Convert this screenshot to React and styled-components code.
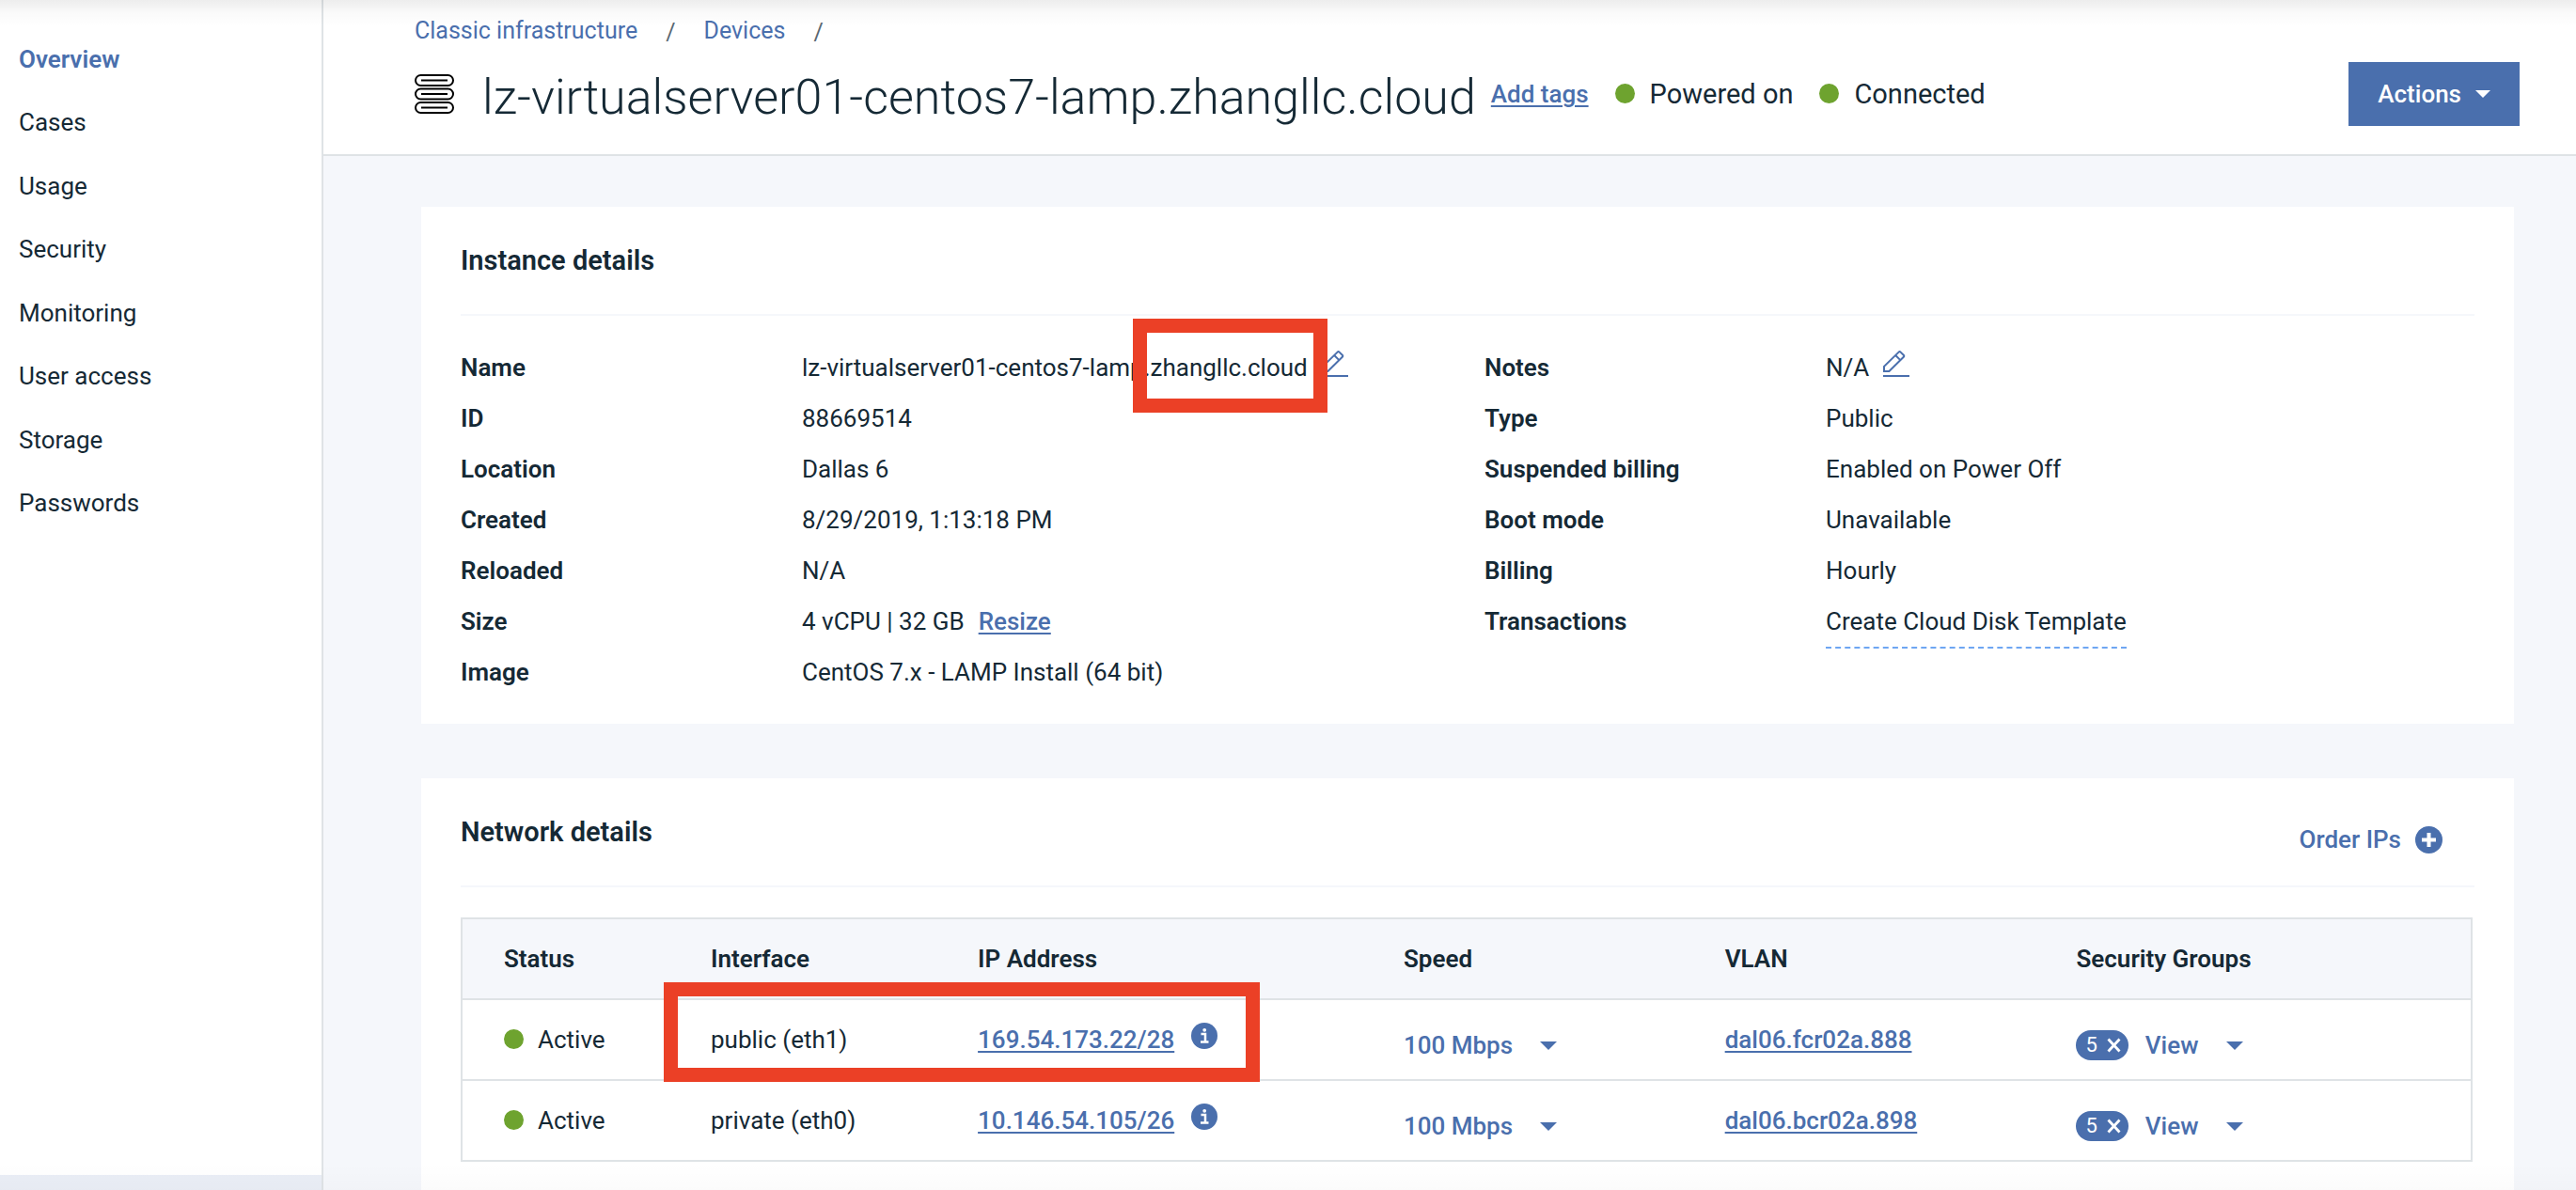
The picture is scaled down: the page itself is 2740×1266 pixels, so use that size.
import React from "react";
import styled, { createGlobalStyle } from "styled-components";

const color = {
  text: "#152935",
  link: "#4a6fad",
  page: "#f5f7fb",
  border: "#dfe3e6",
  green: "#6ea32f",
  red: "#eb4026",
  dash: "#6ea6f2",
};

const GlobalStyle = createGlobalStyle`
  *, *::before, *::after { box-sizing: border-box; }
  body {
    margin: 0;
    background: #ffffff;
    color: ${color.text};
    font-family: Roboto, "Liberation Sans", sans-serif;
    font-size: 26px;
    line-height: 34px;
  }
  button, select { font: inherit; }
`;

const Page = styled.div`
  position: relative;
  display: flex;
  min-height: 100vh;
`;

const Shade = styled.div`
  position: absolute;
  left: 0;
  right: 0;
  z-index: 5;
  pointer-events: none;
`;

const TopShade = styled(Shade)`
  top: 0;
  height: 28px;
  background: linear-gradient(rgba(0, 0, 0, 0.07), rgba(0, 0, 0, 0.02) 50%, rgba(0, 0, 0, 0));
`;

const BottomShade = styled(Shade)`
  bottom: 0;
  height: 28px;
  background: linear-gradient(rgba(0, 0, 0, 0), rgba(0, 0, 0, 0.015));
`;

const Sidebar = styled.aside`
  flex: 0 0 344px;
  display: flex;
  flex-direction: column;
  border-right: 2px solid ${color.border};
`;

const NavList = styled.ul`
  display: grid;
  grid-auto-rows: 1fr;
  height: 540px;
  margin: 29px 0 0;
  padding: 0 20px;
  list-style: none;
`;

const NavItem = styled.li`
  display: flex;
  align-items: center;
`;

const NavLink = styled.a`
  color: ${(p) => (p.$active ? color.link : color.text)};
  font-weight: ${(p) => (p.$active ? 600 : 400)};
  text-decoration: none;
`;

const SidebarFooter = styled.div`
  height: 16px;
  margin-top: auto;
  background: #eaeef6;
`;

const Main = styled.div`
  flex: 1;
  min-width: 0;
  display: flex;
  flex-direction: column;
  background: ${color.page};
`;

const Header = styled.header`
  padding: 18px 60px 30px 97px;
  background: #ffffff;
  border-bottom: 2px solid ${color.border};
`;

const Breadcrumb = styled.nav`
  display: flex;
  gap: 30px;
  font-size: 25px;
  line-height: 30px;
`;

const Crumb = styled.a`
  color: ${color.link};
  text-decoration: none;
`;

const Slash = styled.span`
  color: #5a6872;
  line-height: 34px;
  height: 30px;
`;

const TitleRow = styled.div`
  display: flex;
  align-items: center;
  margin-top: 18px;
`;

const Title = styled.h1`
  margin: 0 16px 0 30px;
  padding-top: 8px;
  font-size: 52px;
  font-weight: 300;
  line-height: 60px;
`;

const TextLink = styled.a`
  color: ${color.link};
  font-weight: 500;
  text-decoration: underline;
  text-decoration-thickness: 2px;
  text-underline-offset: 3px;
`;

const Status = styled.span`
  display: flex;
  align-items: center;
  gap: 16px;
  margin-left: 28px;
  font-size: 29px;
`;

const Dot = styled.span`
  flex: none;
  width: 21px;
  height: 21px;
  margin-bottom: 2px;
  border-radius: 50%;
  background: ${color.green};
`;

const ActionsButton = styled.button`
  display: flex;
  align-items: center;
  gap: 15px;
  height: 68px;
  margin-left: auto;
  padding: 0 31px;
  border: 0;
  background: ${color.link};
  color: #ffffff;
  font-weight: 500;
`;

const Content = styled.main`
  flex: 1;
  display: flex;
  flex-direction: column;
  gap: 58px;
  padding: 54px 66px 0 104px;
`;

const Card = styled.section`
  flex: ${(p) => (p.$fill ? 1 : "none")};
  padding: 0 42px 28px;
  background: #ffffff;
`;

const CardHeader = styled.div`
  display: flex;
  align-items: center;
  justify-content: space-between;
  height: 116px;
  border-bottom: 2px solid ${color.page};
`;

const CardTitle = styled.h2`
  margin: 0;
  font-size: 29px;
  font-weight: 600;
`;

const OrderButton = styled.button`
  display: flex;
  align-items: center;
  gap: 15px;
  padding: 16px 34px 0 0;
  border: 0;
  background: none;
  color: ${color.link};
  font-weight: 500;
`;

const DetailColumns = styled.div`
  display: grid;
  grid-template-columns: 1fr 1fr;
  column-gap: 36px;
  align-items: start;
  padding-top: 28px;
`;

const DetailList = styled.dl`
  display: grid;
  grid-template-columns: 1fr 2fr;
  grid-auto-rows: 54px;
  column-gap: 18px;
  align-items: center;
  margin: 0;
`;

const Term = styled.dt`
  font-weight: 600;
`;

const Value = styled.dd`
  position: relative;
  display: flex;
  align-items: center;
  gap: 15px;
  height: 54px;
  margin: 0;
`;

const Pending = styled.span`
  align-self: flex-start;
  height: 56px;
  padding-top: 10px;
  border-bottom: 2px dashed ${color.dash};
`;

const IconButton = styled.button`
  display: flex;
  padding: 0 0 8px;
  border: 0;
  background: none;
  color: ${color.link};
`;

const Highlight = styled.span`
  position: absolute;
  z-index: 2;
  top: ${(p) => p.$top}px;
  left: ${(p) => p.$left}px;
  width: ${(p) => p.$width}px;
  height: ${(p) => p.$height}px;
  border: 15px solid ${color.red};
  pointer-events: none;
`;

const NetworkTable = styled.table`
  width: calc(100% - 2px);
  margin-top: 32px;
  table-layout: fixed;
  border: 2px solid ${color.border};
  border-spacing: 0;
`;

const HeadCell = styled.th`
  width: ${(p) => p.$width};
  height: 84px;
  padding: 0 0 0 44px;
  background: ${color.page};
  font-weight: 600;
  text-align: left;
`;

const Cell = styled.td`
  position: relative;
  height: 86px;
  padding: 0 0 0 44px;
  border-top: 2px solid ${color.border};
`;

const CellRow = styled.div`
  display: flex;
  align-items: center;
  gap: ${(p) => p.$gap}px;
  padding-top: ${(p) => p.$drop || 0}px;
`;

const SpeedSelect = styled.select`
  appearance: none;
  padding: 0;
  border: 0;
  background: none;
  color: ${color.link};
  font-weight: 500;
`;

const ViewButton = styled.button`
  display: flex;
  align-items: center;
  gap: 30px;
  padding: 0;
  border: 0;
  background: none;
  color: ${color.link};
  font-weight: 500;
`;

const Badge = styled.button`
  display: flex;
  align-items: center;
  gap: 10px;
  height: 32px;
  padding: 0 8px 0 10px;
  border: 0;
  border-radius: 16px;
  background: ${color.link};
  color: #ffffff;
  font-size: 22px;
  line-height: 32px;
`;

const Drawing = styled.svg`
  display: block;
  flex: none;
`;

const LinkDrawing = styled(Drawing)`
  color: ${color.link};
`;

const ServerIcon = () => (
  <Drawing width="42" height="42" viewBox="0 0 42 42" fill="none" stroke="#000" strokeWidth="2">
    {[1, 15.5, 30].map((y) => (
      <g key={y}>
        <rect x="1" y={y} width="40" height="11" rx="5.5" />
        <path d={`M7 ${y + 5.5}h28`} />
      </g>
    ))}
  </Drawing>
);

const PencilIcon = () => (
  <Drawing width="28" height="28" viewBox="0 0 28 28" fill="none" stroke="currentColor" strokeWidth="2">
    <path d="M1 22v-5.2L16.6 1.6q1-1 2 0l3.2 3.2q1 1 0 2L6.4 22zM13.2 5l5.4 5.4M0 27h28" />
  </Drawing>
);

const caretPath = "M0 0h18L9 9z";

const Caret = ({ width = 18, height = 9 }) => (
  <Drawing width={width} height={height} viewBox="0 0 18 9" fill="currentColor">
    <path d={caretPath} />
  </Drawing>
);

const SelectCaret = () => (
  <LinkDrawing width="18" height="9" viewBox="0 0 18 9" fill="currentColor">
    <path d={caretPath} />
  </LinkDrawing>
);

const PlusIcon = () => (
  <Drawing width="29" height="29" viewBox="0 0 29 29">
    <circle cx="14.5" cy="14.5" r="14.5" fill="currentColor" />
    <path d="M14.5 7v15M7 14.5h15" stroke="#fff" strokeWidth="4" />
  </Drawing>
);

const InfoIcon = () => (
  <Drawing width="28" height="28" viewBox="0 0 28 28">
    <circle cx="14" cy="14" r="14" fill="currentColor" />
    <path d="M10.5 12H15v8.5M10 20.5h8.5" stroke="#fff" strokeWidth="2.5" fill="none" />
    <circle cx="14.2" cy="7.8" r="1.9" fill="#fff" />
  </Drawing>
);

const CrossIcon = () => (
  <Drawing width="15" height="16" viewBox="0 0 15 16" stroke="#fff" strokeWidth="2.8">
    <path d="M1.5 1.5l12 13M13.5 1.5l-12 13" />
  </Drawing>
);

const navItems = ["Overview", "Cases", "Usage", "Security", "Monitoring", "User access", "Storage", "Passwords"];

const columns = [
  ["Status", "10.3%"],
  ["Interface", "13.3%"],
  ["IP Address", "21.2%"],
  ["Speed", "16%"],
  ["VLAN", "17.5%"],
  ["Security Groups", "auto"],
];

const interfaces = [
  { name: "public (eth1)", ip: "169.54.173.22/28", vlan: "dal06.fcr02a.888", marked: true },
  { name: "private (eth0)", ip: "10.146.54.105/26", vlan: "dal06.bcr02a.898" },
];

const EditButton = ({ label }) => (
  <IconButton type="button" aria-label={label}>
    <PencilIcon />
  </IconButton>
);

const hostname = "lz-virtualserver01-centos7-lamp.zhangllc.cloud";

const instanceDetails = [
  [
    "Name",
    <>
      {hostname}
      <EditButton label="Edit name" />
      <Highlight $top={-25} $left={352} $width={207} $height={100} />
    </>,
  ],
  ["ID", "88669514"],
  ["Location", "Dallas 6"],
  ["Created", "8/29/2019, 1:13:18 PM"],
  ["Reloaded", "N/A"],
  [
    "Size",
    <>
      4 vCPU | 32 GB <TextLink href="#resize">Resize</TextLink>
    </>,
  ],
  ["Image", "CentOS 7.x - LAMP Install (64 bit)"],
];

const billingDetails = [
  [
    "Notes",
    <>
      N/A
      <EditButton label="Edit notes" />
    </>,
  ],
  ["Type", "Public"],
  ["Suspended billing", "Enabled on Power Off"],
  ["Boot mode", "Unavailable"],
  ["Billing", "Hourly"],
  ["Transactions", <Pending>Create Cloud Disk Template</Pending>],
];

const Details = ({ items }) => (
  <DetailList>
    {items.map(([term, value]) => (
      <React.Fragment key={term}>
        <Term>{term}</Term>
        <Value>{value}</Value>
      </React.Fragment>
    ))}
  </DetailList>
);

const InterfaceRow = ({ item }) => (
  <tr>
    <Cell>
      <CellRow $gap={15}>
        <Dot />
        Active
      </CellRow>
    </Cell>
    <Cell>
      {item.name}
      {item.marked && <Highlight $top={-19} $left={-6} $width={634} $height={106} />}
    </Cell>
    <Cell>
      <CellRow $gap={18}>
        <TextLink href="#ip">{item.ip}</TextLink>
        <IconButton type="button" aria-label="IP address information">
          <InfoIcon />
        </IconButton>
      </CellRow>
    </Cell>
    <Cell>
      <CellRow $gap={28} $drop={12}>
        <SpeedSelect aria-label={`Speed of ${item.name}`}>
          <option>100 Mbps</option>
        </SpeedSelect>
        <SelectCaret />
      </CellRow>
    </Cell>
    <Cell>
      <TextLink href="#vlan">{item.vlan}</TextLink>
    </Cell>
    <Cell>
      <CellRow $gap={18} $drop={12}>
        <Badge type="button" aria-label="Clear 5 security groups">
          5 <CrossIcon />
        </Badge>
        <ViewButton type="button">
          View <Caret />
        </ViewButton>
      </CellRow>
    </Cell>
  </tr>
);

export default function App() {
  return (
    <Page>
      <GlobalStyle />
      <Sidebar>
        <nav aria-label="Device">
          <NavList>
            {navItems.map((item, i) => (
              <NavItem key={item}>
                <NavLink href="#nav" $active={i === 0}>
                  {item}
                </NavLink>
              </NavItem>
            ))}
          </NavList>
        </nav>
        <SidebarFooter />
      </Sidebar>
      <Main>
        <Header>
          <Breadcrumb aria-label="Breadcrumb">
            <Crumb href="#classic">Classic infrastructure</Crumb>
            <Slash>/</Slash>
            <Crumb href="#devices">Devices</Crumb>
            <Slash>/</Slash>
          </Breadcrumb>
          <TitleRow>
            <ServerIcon />
            <Title>{hostname}</Title>
            <TextLink href="#tags">Add tags</TextLink>
            <Status>
              <Dot />
              Powered on
            </Status>
            <Status>
              <Dot />
              Connected
            </Status>
            <ActionsButton type="button">
              Actions <Caret width={16} height={8} />
            </ActionsButton>
          </TitleRow>
        </Header>
        <Content>
          <Card>
            <CardHeader>
              <CardTitle>Instance details</CardTitle>
            </CardHeader>
            <DetailColumns>
              <Details items={instanceDetails} />
              <Details items={billingDetails} />
            </DetailColumns>
          </Card>
          <Card $fill>
            <CardHeader>
              <CardTitle>Network details</CardTitle>
              <OrderButton type="button">
                Order IPs <PlusIcon />
              </OrderButton>
            </CardHeader>
            <NetworkTable>
              <thead>
                <tr>
                  {columns.map(([name, width]) => (
                    <HeadCell key={name} $width={width} scope="col">
                      {name}
                    </HeadCell>
                  ))}
                </tr>
              </thead>
              <tbody>
                {interfaces.map((item) => (
                  <InterfaceRow key={item.name} item={item} />
                ))}
              </tbody>
            </NetworkTable>
          </Card>
        </Content>
      </Main>
      <TopShade />
      <BottomShade />
    </Page>
  );
}
